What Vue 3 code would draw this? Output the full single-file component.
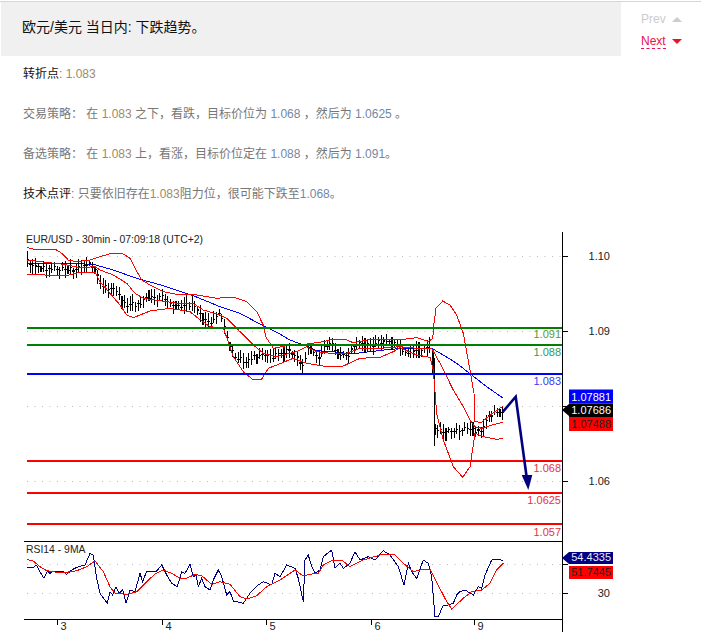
<script setup>
const conv = (ox, oy) => (pts) => pts.map(([x, y]) => [ox + x / 3, oy + y / 3])
const z3 = conv(20, 225)
const z4 = conv(280, 280)
const z5 = conv(420, 290)
const z6 = conv(20, 535)
const z7 = conv(300, 480)
const str = (pts) => pts.map(([x, y]) => `${x.toFixed(1)},${y.toFixed(1)}`).join(' ')

const upper = str([
  ...z3([[22,68],[40,72],[105,72],[125,85],[145,105],[170,110],[210,105],[240,95],[275,85],[310,87],[330,100],[345,130],[365,165],[390,180],[430,200],[470,208],[520,208],[590,220],[640,216],[680,230],[710,260],[730,300],[737,335],[760,370]]),
  ...z4([[20,197],[60,195],[130,185],[160,178],[200,180],[220,188],[260,180],[310,178],[370,178],[410,173],[440,183]]),
  ...z5([[25,155],[38,145],[42,100],[48,55],[68,33],[90,45],[110,75],[130,130],[150,240],[162,310],[165,395],[185,397],[210,375],[250,348]])
])
const middle = str([
  ...z3([[22,105],[60,110],[130,118],[180,128],[225,125],[240,135],[280,150],[320,175],[345,205],[370,220],[440,230],[470,235],[520,235],[550,255],[600,270],[620,280],[660,320],[700,360],[730,385],[770,395]]),
  ...z4([[50,215],[80,200],[110,215],[150,220],[200,220],[240,205],[300,205],[360,200],[410,205],[455,205]]),
  ...z5([[38,180],[60,220],[100,300],[130,350],[150,390],[165,410],[185,415],[215,405],[250,397]])
])
const lower = str([
  ...z3([[22,148],[50,148],[100,152],[140,152],[180,142],[225,142],[240,170],[270,205],[300,240],[320,270],[340,278],[360,270],[390,258],[450,250],[510,260],[535,280],[570,305],[610,310],[625,350],[640,395],[670,440],[700,465],[725,462],[745,430],[770,420]]),
  ...z4([[40,235],[80,250],[130,258],[190,258],[240,235],[300,232],[340,215],[360,203],[410,225],[450,232]]),
  ...z5([[30,200],[40,240],[50,370],[70,450],[100,530],[128,562],[150,530],[162,450],[165,430],[190,440],[230,448],[250,445]])
])
const ma = str([
  ...z3([[22,115],[130,115],[220,118],[280,135],[350,160],[430,182],[520,212],[600,245],[660,265],[725,300],[770,322]]),
  ...z4([[30,180],[70,195],[110,212],[160,215],[210,222],[270,215],[330,208],[380,205],[455,205]]),
  ...z5([[35,175],[70,195],[110,220],[155,255],[200,290],[250,325]])
])

const centre = [
  ...z3([[22,105],[40,118],[60,125],[75,132],[100,130],[130,130],[150,135],[180,125],[215,118],[230,135],[240,170],[260,190],[285,195],[300,215],[320,245],[340,240],[365,230],[385,220],[430,218],[450,240],[475,245],[515,235],[535,265],[555,285],[580,290],[600,265],[615,310],[630,360],[645,395],[680,410],[700,400],[730,385],[760,395]]),
  ...z4([[0,218],[30,215],[50,225],[70,262],[85,200],[100,215],[115,240],[130,205],[150,185],[175,225],[205,225],[230,190],[260,195],[320,185],[350,195],[375,215],[400,210],[425,205],[455,205]]),
  ...z5([[45,420],[60,420],[90,420],[110,420],[150,410],[165,430],[190,420],[210,375],[250,365]])
]
const yAt = (x) => {
  for (let i = 1; i < centre.length; i++) {
    if (x <= centre[i][0]) {
      const [a, b] = centre[i - 1]
      const [c, e] = centre[i]
      return b + ((e - b) * (x - a)) / (c - a || 1)
    }
  }
  return centre[centre.length - 1][1]
}
let seed = 7
const rnd = () => {
  seed = (seed * 1103 + 12345) % 65536
  return seed / 65536
}
let d = ''
for (let x = 27.5; x < 503; x += 2.7) {
  const y = yAt(x) + (rnd() - 0.5) * 5
  const up = 3 + rnd() * 6
  const dn = 3 + rnd() * 6
  d += `M${x.toFixed(1)} ${(y - up).toFixed(1)}V${(y + dn).toFixed(1)}M${(x - 1).toFixed(1)} ${y.toFixed(1)}H${(x + 1.5).toFixed(1)}`
}
d += 'M434.5 358V446M433 350V372'
const candles = d

const rsiBlue = str([
  ...z6([[20,97],[40,97],[50,90],[60,110],[72,130],[82,108],[90,115],[100,108],[115,110],[130,110],[140,118],[155,105],[165,100],[175,95],[195,90],[210,55],[220,60],[230,130],[240,175],[262,205],[270,170],[278,180],[288,155],[298,175],[308,165],[318,205],[330,165],[345,170],[360,115],[368,140],[380,108],[410,108],[425,90],[440,120],[455,145],[472,155],[485,110],[495,115],[510,88],[520,125],[528,120],[535,155],[545,130],[555,155],[570,165],[580,135],[595,105],[605,125],[620,180],[630,170],[640,198],[670,205],[690,175],[715,150],[730,140],[755,150],[765,115],[780,125],[800,90],[825,100],[835,130],[850,200]]),
  ...z7([[15,240],[25,225],[35,260],[45,280],[60,270],[70,230],[95,210],[105,265],[120,250],[130,265],[150,250],[165,215],[180,240],[205,230],[225,240],[250,212],[270,225],[295,260],[312,315],[325,250],[335,275],[350,295],[370,240],[385,250],[395,290],[405,410],[415,410],[430,375],[445,375],[460,370],[470,345],[480,335],[495,330],[520,345],[535,320],[545,325],[555,285],[575,240],[595,237],[610,243]])
])
const rsiRed = str([
  ...z6([[20,73],[40,78],[60,95],[80,107],[110,112],[140,112],[170,107],[200,95],[225,78],[250,110],[270,155],[285,175],[320,178],[350,170],[380,140],[405,117],[430,105],[455,115],[480,130],[500,130],[525,118],[545,122],[575,148],[600,140],[630,148],[660,185],[680,192],[710,182],[740,155],[780,135],[825,105],[850,123]]),
  ...z7([[30,283],[55,280],[70,255],[100,240],[125,240],[150,260],[190,240],[250,222],[285,225],[310,250],[340,275],[370,268],[390,268],[440,365],[455,387],[490,355],[515,335],[545,330],[570,310],[590,270],[610,250]])
])

const levels = [
  { y: 328, c: '#008000' },
  { y: 345, c: '#008000' },
  { y: 374, c: '#0000ff' },
  { y: 461, c: '#ff0000' },
  { y: 493, c: '#ff0000' },
  { y: 524, c: '#ff0000' }
]
const levelLabels = [
  { y: 338, t: '1.091', c: '#5f9a2a' },
  { y: 356, t: '1.088', c: '#2f9a55' },
  { y: 385, t: '1.083', c: '#3a3aee' },
  { y: 472, t: '1.068', c: '#e8323c' },
  { y: 504, t: '1.0625', c: '#e8323c' },
  { y: 536, t: '1.057', c: '#e8323c' }
]
const grids = [256.5, 331.5, 406.5, 481.5, 564.5, 593.5]
const axisLabels = [
  { y: 260, t: '1.10' },
  { y: 335, t: '1.09' },
  { y: 485, t: '1.06' },
  { y: 597, t: '30' }
]
const days = [
  { x: 57.5, t: '3' },
  { x: 162.5, t: '4' },
  { x: 266.5, t: '5' },
  { x: 371.5, t: '6' },
  { x: 474.5, t: '9' }
]
const tags = [
  { y: 389.5, h: 14, fill: '#0000ff', ink: '#ffffff', t: '1.07881' },
  { y: 417, h: 14, fill: '#ff0000', ink: '#222222', t: '1.07488' },
  { y: 403.5, h: 13.5, fill: '#000000', ink: '#ffffff', t: '1.07686' },
  { y: 566, h: 13, fill: '#ff0000', ink: '#222222', t: '51.7445' },
  { y: 552, h: 12, fill: '#000080', ink: '#e8e8ff', t: '54.4335' }
]
</script>

<template>
  <div class="page">
    <div class="top">
      <h1 class="title">欧元/美元 当日内: 下跌趋势。</h1>
      <nav class="nav">
        <div class="nav-row prev"><span>Prev</span><i class="tri up"></i></div>
        <div class="nav-row next"><span class="link">Next</span><i class="tri down"></i></div>
      </nav>
    </div>
    <div class="body">
      <p><b>转折点</b>: <span class="a">1.083</span></p>
      <p>交易策略： 在 <span class="a">1.083</span> 之下，看跌，目标价位为 <span class="b">1.068</span> ，然后为 <span class="b">1.0625</span> 。</p>
      <p>备选策略： 在 <span class="a">1.083</span> 上，看涨，目标价位定在 <span class="b">1.088</span> ，然后为 <span class="b">1.091</span>。</p>
      <p><b>技术点评</b>: 只要依旧存在<span class="a">1.083</span>阻力位，很可能下跌至<span class="b">1.068</span>。</p>
    </div>
    <svg class="chart" viewBox="0 225 720 411" width="720" height="411">
      <g stroke="#bbbbbb" stroke-width="1" stroke-dasharray="1 6.5">
        <line v-for="g in grids" :key="g" x1="27" x2="562" :y1="g" :y2="g" />
      </g>
      <text x="26" y="243" class="t11">EUR/USD - 30min - 07:09:18 (UTC+2)</text>

      <polyline :points="ma" class="ln" stroke="#0000ff" />
      <path :d="candles" class="bars" />
      <polyline :points="upper" class="ln" stroke="#ff0000" />
      <polyline :points="middle" class="ln" stroke="#ff0000" />
      <polyline :points="lower" class="ln" stroke="#ff0000" />

      <line v-for="l in levels" :key="l.y" x1="27" x2="562" :y1="l.y" :y2="l.y" :stroke="l.c" stroke-width="2" />
      <text v-for="l in levelLabels" :key="l.t" x="561" :y="l.y" class="t12" text-anchor="end" :fill="l.c">{{ l.t }}</text>

      <polyline points="503,411.7 515.7,396.7 526.5,476" fill="none" stroke="#000080" stroke-width="2.6" />
      <polygon points="521.7,475 532.3,475 528.3,490" fill="#000080" />

      <line x1="24" x2="562" y1="541.5" y2="541.5" stroke="#000" />
      <line x1="24" x2="562" y1="619.5" y2="619.5" stroke="#000" />
      <text x="26" y="553" class="t11">RSI14 - 9MA</text>
      <polyline :points="rsiBlue" class="ln" stroke="#000080" />
      <polyline :points="rsiRed" class="ln" stroke="#ff0000" />

      <line x1="562.5" x2="562.5" y1="232" y2="632" stroke="#000" />
      <line v-for="g in grids" :key="'t' + g" x1="562" x2="568" :y1="g" :y2="g" stroke="#000" />
      <text v-for="a in axisLabels" :key="a.t" x="610" :y="a.y" class="t12" text-anchor="end" fill="#222">{{ a.t }}</text>

      <g v-for="t in days" :key="t.t">
        <line :x1="t.x" :x2="t.x" y1="619" y2="625" stroke="#000" />
        <text :x="t.x + 3" y="630" class="t12" fill="#222">{{ t.t }}</text>
      </g>

      <polygon points="562,410 569,404 569,416" fill="#000" />
      <polygon points="562,558 569,552 569,564" fill="#000080" />
      <g v-for="t in tags" :key="t.t">
        <rect x="569" :y="t.y" width="44" :height="t.h" :fill="t.fill" />
        <text x="611" :y="t.y + t.h - 3" class="t12" text-anchor="end" :fill="t.ink">{{ t.t }}</text>
      </g>
    </svg>
  </div>
</template>

<style scoped>
.page {
  width: 720px;
  height: 636px;
  overflow: hidden;
  font-family: "Liberation Sans", "Noto Sans CJK SC", sans-serif;
  color: #777;
}
.top {
  display: flex;
  width: 701px;
  margin-top: 1px;
  border-top: 1px solid #d6d6d6;
  height: 54px;
}
.title {
  margin: 0 0 0 1px;
  width: 620px;
  height: 54px;
  background: #f0f0f0;
  padding-left: 21px;
  box-sizing: border-box;
  font-size: 14px;
  font-weight: 400;
  line-height: 50px;
  color: #111;
}
.nav {
  padding: 6px 0 0 20px;
  font-size: 12px;
}
.nav-row {
  display: flex;
  align-items: center;
  gap: 6px;
  height: 22px;
}
.prev {
  color: #cccccc;
}
.next {
  color: #e8104f;
}
.link {
  line-height: 14px;
  border-bottom: 1px dashed #e8104f;
}
.tri {
  display: block;
  width: 0;
  height: 0;
  border-left: 5px solid transparent;
  border-right: 5px solid transparent;
}
.up {
  border-bottom: 5px solid #cccccc;
}
.down {
  border-top: 5px solid #e8141e;
}
.body {
  padding: 8px 0 0 23px;
  font-size: 12px;
  line-height: 20px;
}
.body p {
  margin: 0 0 20px;
}
.body b {
  font-weight: 400;
  color: #111;
}
.a {
  color: #a38a66;
}
.b {
  color: #7488a6;
}
.chart {
  display: block;
  margin-top: 21px;
}
.t11 {
  font-size: 10.4px;
  fill: #222;
}
.t12 {
  font-size: 11px;
}
.ln {
  fill: none;
  stroke-width: 1;
  shape-rendering: crispEdges;
}
.bars {
  fill: none;
  stroke: #000;
  stroke-width: 1.1;
  shape-rendering: crispEdges;
}
</style>
